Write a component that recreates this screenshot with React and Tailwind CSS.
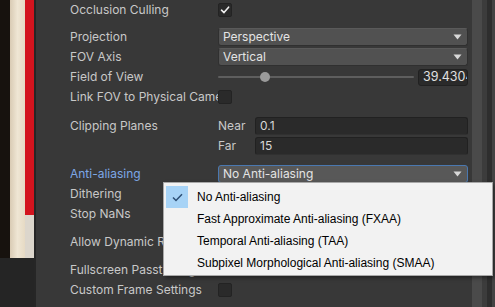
import { useState } from "react";

const Label = ({ children, blue }) => (
  <div
    className={`w-[148px] shrink-0 overflow-hidden whitespace-nowrap ${
      blue ? "text-[#7da7e6]" : "text-[#c8c8c8]"
    }`}
  >
    {children}
  </div>
);

const Checkbox = ({ checked }) => (
  <div className="flex h-[14px] w-[14px] items-center justify-center rounded-[2px] border border-[#232323] bg-[#2a2a2a]">
    {checked && (
      <svg width="10" height="10" viewBox="0 0 10 10" fill="none">
        <path d="M1.5 5.2 L4 7.6 L8.6 2.2" stroke="#f0f0f0" strokeWidth="1.6" strokeLinecap="round" strokeLinejoin="round" />
      </svg>
    )}
  </div>
);

const Arrow = () => (
  <svg width="9" height="6" viewBox="0 0 9 6" className="mr-[3px] shrink-0">
    <path d="M0.5 0.5 H8.5 L4.5 5.5 Z" fill="#d8d8d8" />
  </svg>
);

const Dropdown = ({ value, focused }) => (
  <div
    className={`flex h-[18px] flex-1 items-center justify-between rounded-[3px] pl-[4px] pr-[2px] text-[#e4e4e4] ${
      focused
        ? "border border-[#4a78b0] bg-[#585858]"
        : "border border-[#303030] border-t-[#5a5a5a] bg-[#515151]"
    }`}
  >
    <span className="truncate">{value}</span>
    <Arrow />
  </div>
);

const TextField = ({ value }) => (
  <div className="flex h-[18px] flex-1 items-center overflow-hidden rounded-[3px] border border-[#212121] border-b-[#303030] bg-[#2a2a2a] pl-[4px] text-[#d8d8d8]">
    {value}
  </div>
);

const Row = ({ className = "", children }) => (
  <div className={`flex h-[20px] items-center ${className}`}>{children}</div>
);

const options = [
  "No Anti-aliasing",
  "Fast Approximate Anti-aliasing (FXAA)",
  "Temporal Anti-aliasing (TAA)",
  "Subpixel Morphological Anti-aliasing (SMAA)",
];

export default function App() {
  const [selected] = useState(0);

  return (
    <div
      className="relative flex h-[307px] w-[495px] overflow-hidden bg-[#383838] text-[12px]"
      style={{ fontFamily: "Inter, 'Noto Sans', sans-serif" }}
    >
      {/* scene view strip */}
      <div className="flex w-[34px] shrink-0 flex-col">
        <div className="flex h-[258px]">
          <div className="w-[10px] bg-[#17120e]" />
          <div className="w-[15px] bg-gradient-to-r from-[#d9cbb4] via-[#efe6d4] to-[#e6dac4]" />
          <div className="flex w-[9px] flex-col">
            <div className="h-[215px] bg-[#d3141e]" />
            <div className="flex-1 bg-[#dcd6cc]" />
          </div>
        </div>
        <div className="flex-1 bg-[#252525]" />
      </div>
      <div className="w-[2px] shrink-0 bg-[#262626]" />

      {/* inspector */}
      <div className="flex w-[436px] shrink-0 flex-col pl-[34px] pr-[4px]">
        <Row>
          <Label>Occlusion Culling</Label>
          <Checkbox checked />
        </Row>
        <Row className="mt-[7px]">
          <Label>Projection</Label>
          <Dropdown value="Perspective" />
        </Row>
        <Row>
          <Label>FOV Axis</Label>
          <Dropdown value="Vertical" />
        </Row>
        <Row>
          <Label>Field of View</Label>
          <div className="flex flex-1 items-center">
            <div className="relative mr-[4px] h-[12px] flex-1">
              <div className="absolute left-0 right-0 top-[5px] h-[2px] rounded bg-[#5e5e5e]" />
              <div className="absolute left-[42px] top-[1px] h-[10px] w-[10px] rounded-full bg-[#9a9a9a]" />
            </div>
            <div className="flex h-[17px] w-[50px] items-center overflow-hidden whitespace-nowrap rounded-[3px] border border-[#212121] bg-[#2a2a2a] pl-[4px] text-[12.5px] text-[#e0e0e0]">
              39.4304
            </div>
          </div>
        </Row>
        <Row>
          <Label>Link FOV to Physical Camera</Label>
          <Checkbox />
        </Row>
        <Row className="mt-[9px]">
          <Label>Clipping Planes</Label>
          <div className="w-[37px] shrink-0 text-[#c8c8c8]">Near</div>
          <TextField value="0.1" />
        </Row>
        <Row className="h-[19px]">
          <Label />
          <div className="w-[37px] shrink-0 text-[#c8c8c8]">Far</div>
          <TextField value="15" />
        </Row>
        <Row className="mt-[8px]">
          <Label blue>Anti-aliasing</Label>
          <Dropdown value="No Anti-aliasing" focused />
        </Row>
        <Row>
          <Label>Dithering</Label>
        </Row>
        <Row>
          <Label>Stop NaNs</Label>
        </Row>
        <Row className="mt-[8px]">
          <Label>Allow Dynamic Resolution</Label>
        </Row>
        <Row className="mt-[8px]">
          <Label>Fullscreen Passthrough</Label>
        </Row>
        <Row>
          <Label>Custom Frame Settings</Label>
          <Checkbox />
        </Row>
      </div>

      {/* scrollbar area */}
      <div className="flex flex-1">
        <div className="w-[10px] bg-[#4a4a4a]" />
        <div className="w-[5px] bg-[#3c3c3c]" />
        <div className="w-[5px] bg-[#2e2e2e]" />
        <div className="flex-1 bg-[#434343]" />
      </div>

      {/* popup menu */}
      <div
        className="absolute left-[163px] top-[182px] flex h-[94px] w-[330px] flex-col border border-[#a8a8a8] bg-[#f2f2f2] py-[3px] pl-[2px] text-[12px] text-black shadow-[2px_2px_4px_rgba(0,0,0,0.4)]"
        style={{ fontFamily: "'Liberation Sans', Arial, sans-serif" }}
      >
        {options.map((o, i) => (
          <div key={o} className="flex h-[22px] items-center">
            <div
              className={`flex h-[22px] w-[22px] items-center justify-center ${
                i === selected ? "bg-[#a7d3f6]" : ""
              }`}
            >
              {i === selected && (
                <svg width="11" height="9" viewBox="0 0 11 9" fill="none">
                  <path d="M1 4.5 L4 7.5 L10 1.2" stroke="#2d4f75" strokeWidth="1.5" />
                </svg>
              )}
            </div>
            <span className="ml-[9px] whitespace-nowrap">{o}</span>
          </div>
        ))}
      </div>
    </div>
  );
}
